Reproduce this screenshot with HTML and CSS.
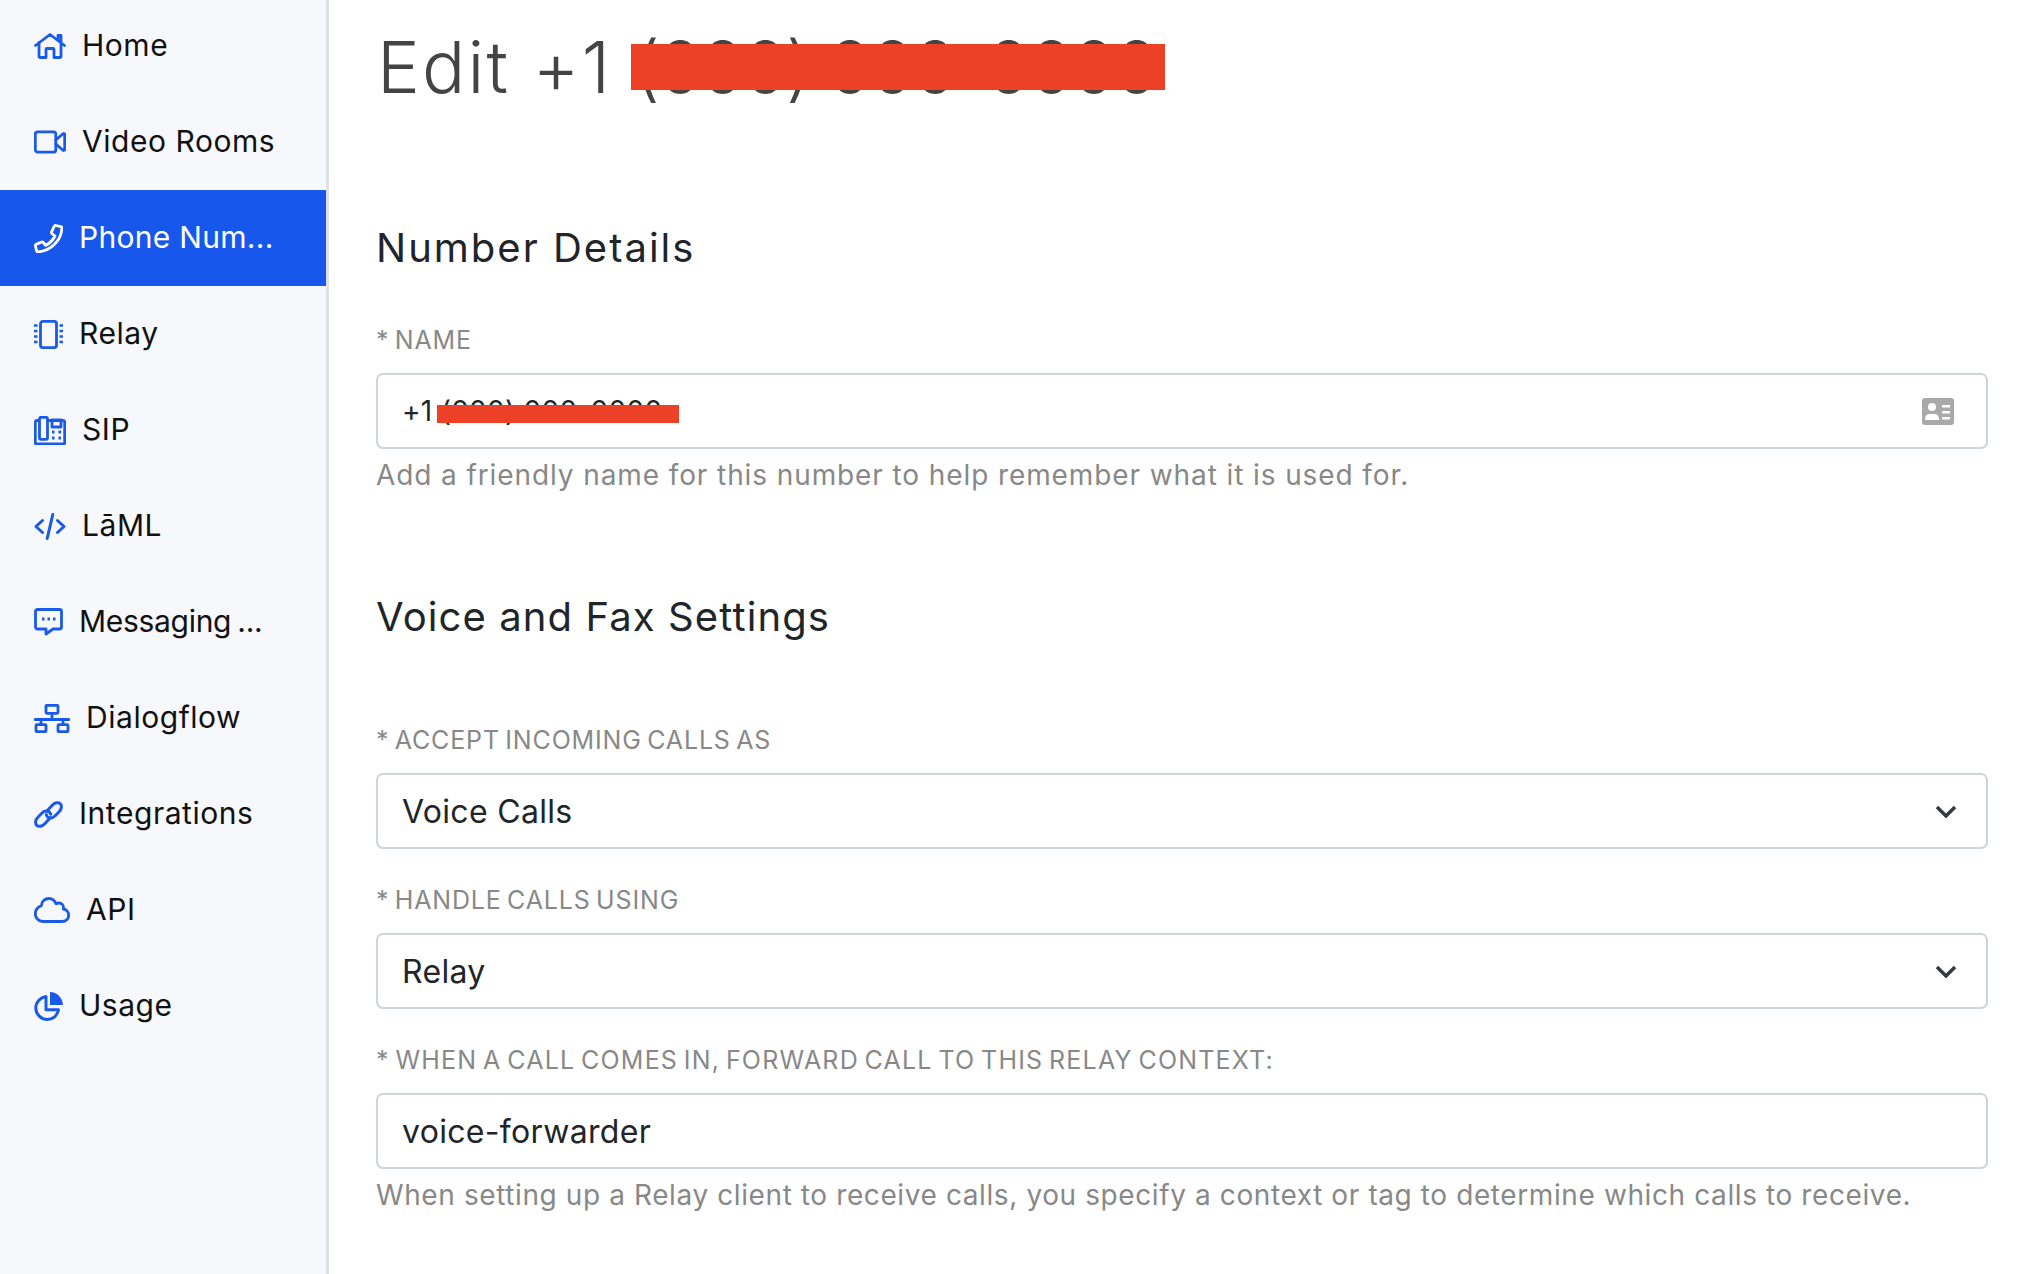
FILE: index.html
```html
<!DOCTYPE html>
<html lang="en">
<head>
<meta charset="utf-8">
<title>Edit number</title>
<link rel="stylesheet" href="styles.css">
</head>
<body>
<div class="app">
  <aside class="sidebar">
    <nav class="nav">
      <a class="nav-item"><svg class="ico w32" viewBox="0 0 32 26"><path d="M1.500 12.500 16 1.500l14.500 11M5 9.500V23a1.500 1.500 0 0 0 1.500 1.500H12V16.500a1 1 0 0 1 1-1h6a1 1 0 0 1 1 1v8h5.500A1.500 1.500 0 0 0 27 23V9.500M24 7V2.500h3V9"/></svg><span class="nav-label">Home</span></a>
      <a class="nav-item"><svg class="ico w32" viewBox="0 0 32 24"><rect x="1.300" y="1.800" width="20.500" height="20.400" rx="2.500"/><path d="M21.800 10 29 3.800c.8-.6 1.700-.1 1.700.8v14.800c0 .9-.9 1.400-1.700.8L21.800 14"/></svg><span class="nav-label">Video Rooms</span></a>
      <a class="nav-item active"><svg class="ico w29" viewBox="0 0 29 29"><path d="M22 1.500l4.800 1.200c.8.200 1.200.9 1.100 1.600C27 17 16.500 27 4.200 27.800c-.8 0-1.500-.4-1.600-1.100L1.400 22c-.2-.7.1-1.300.7-1.600l5.500-2.400c.6-.2 1.200 0 1.600.4l2.400 3c4-2 7.400-5.400 9.400-9.400l-3-2.400c-.5-.4-.7-1.100-.4-1.700l2.600-5.600c.3-.6 1.100-1 1.800-.8z"/></svg><span class="nav-label nav-label-phone">Phone Num...</span></a>
      <a class="nav-item"><svg class="ico w29" viewBox="0 0 29 29"><rect x="6.500" y="1.300" width="16" height="26.400" rx="2.500"/><path class="dash" d="M0 5.500h3.500M0 11h3.500M0 16.500h3.500M0 22h3.500M25.500 5.500H29M25.500 11H29M25.500 16.500H29M25.500 22H29"/></svg><span class="nav-label">Relay</span></a>
      <a class="nav-item"><svg class="ico w32" viewBox="0 0 32 29"><path d="M5 4.500H3A1.800 1.800 0 0 0 1.300 6.300v20.400A1.300 1.300 0 0 0 2.600 28h26.800a1.300 1.300 0 0 0 1.300-1.300V6.300a1.800 1.800 0 0 0-1.700-1.800H14"/><rect x="5.500" y="1.300" width="8" height="22" rx="1.500"/><path d="M18 4v7h9V4z"/><path class="dots" d="M18 16h2.500M24.500 16h2.500M18 22h2.500M24.500 22h2.500"/></svg><span class="nav-label">SIP</span></a>
      <a class="nav-item"><svg class="ico w32" viewBox="0 0 32 27"><path class="thick" d="M8.500 7.500 2 13.500l6.500 6M23.500 7.500l6.500 6-6.500 6M18.800 1.500l-5.600 24"/></svg><span class="nav-label">LāML</span></a>
      <a class="nav-item"><svg class="ico w29" viewBox="0 0 29 28"><path d="M3.500 1.500h22a2 2 0 0 1 2 2v15.500a2 2 0 0 1-2 2H19l-7 5v-5H3.500a2 2 0 0 1-2-2V3.500a2 2 0 0 1 2-2z"/><path class="dots" d="M8 11h2.500M13.500 11H16M19 11h2.500"/></svg><span class="nav-label nav-label-msg">Messaging ...</span></a>
      <a class="nav-item"><svg class="ico w36" viewBox="0 0 36 29"><rect x="12" y="1.300" width="12" height="8" rx="1"/><path d="M18 9.500v6M1 15.500h34"/><path d="M7 15.500v5M29 15.500v5"/><rect x="2" y="20.700" width="10" height="7" rx="1"/><rect x="24" y="20.700" width="10" height="7" rx="1"/></svg><span class="nav-label">Dialogflow</span></a>
      <a class="nav-item"><svg class="ico w29" viewBox="0 0 29 29"><path class="thick" d="M12.500 11.500 18 5.500c2.800-3 6.200-3.700 8.200-1.800s1.500 5.400-1.300 8.300l-3.700 3.800c-2.600 2.600-5.700 2.900-7.700 1-.6-.6-1-1.300-1.200-2.100"/><path class="thick" d="M16.500 17.500 11 23.500c-2.800 3-6.200 3.700-8.200 1.800s-1.500-5.400 1.300-8.300l3.700-3.800c2.600-2.600 5.700-2.900 7.700-1 .6.600 1 1.300 1.200 2.100"/></svg><span class="nav-label">Integrations</span></a>
      <a class="nav-item"><svg class="ico w36" viewBox="0 0 36 26"><path d="M9 24.500h19c3.800 0 6.700-2.800 6.700-6.300 0-3.200-2.300-5.700-5.400-6.200.2-.6.200-1 .2-1.500 0-2.500-2-4.500-4.700-4.500-1 0-1.900.3-2.700.8C20.500 3.300 18 1.500 15 1.500c-4.200 0-7.500 3.100-7.600 7.200C3.800 10 1.300 13 1.300 16.800c0 4.300 3.400 7.700 7.700 7.700z"/></svg><span class="nav-label">API</span></a>
      <a class="nav-item"><svg class="ico w29" viewBox="0 0 29 29"><path class="thick" d="M12 4.500C6 5.500 1.800 10.300 1.800 16c0 6.300 5.200 11.500 11.500 11.500 5.700 0 10.200-4 11.200-9.700H12z"/><path class="solid" d="M16 0c7 .2 12.600 5.800 13 13H16z"/></svg><span class="nav-label">Usage</span></a>
    </nav>
  </aside>
  <main class="main">
    <h1 class="title">Edit +1 <span class="masked masked-title">(000) 000-0000<i class="redact redact-title"></i></span></h1>
    <section class="block-first">
      <h2 class="heading heading-short">Number Details</h2>
      <div class="group">
        <label class="label">* NAME</label>
        <div class="field field-id"><span class="value value-small">+1 <span class="masked">(000) 000-0000<i class="redact redact-name"></i></span></span>
          <svg class="idcard" viewBox="0 0 32 27"><path d="M3 0h26a3 3 0 0 1 3 3v21a3 3 0 0 1-3 3H3a3 3 0 0 1-3-3V3a3 3 0 0 1 3-3z"/><circle class="cut" cx="10" cy="9" r="4"/><path class="cut" d="M3 21c0-3 2-5 4-5h6c2 0 4 2 4 5v1H3zM20 7h8v2.500h-8zM20 13h8v2.500h-8zM20 19h8v2.500h-8z"/></svg>
        </div>
        <p class="help help-short">Add a friendly name for this number to help remember what it is used for.</p>
      </div>
    </section>
    <section class="block-second">
      <h2 class="heading">Voice and Fax Settings</h2>
      <div class="group group-accept">
        <label class="label">* ACCEPT INCOMING CALLS AS</label>
        <div class="field"><span class="value">Voice Calls</span><svg class="chev" viewBox="0 0 22 13"><path d="M2 2l9 9 9-9"/></svg></div>
      </div>
      <div class="group">
        <label class="label">* HANDLE CALLS USING</label>
        <div class="field"><span class="value">Relay</span><svg class="chev" viewBox="0 0 22 13"><path d="M2 2l9 9 9-9"/></svg></div>
      </div>
      <div class="group">
        <label class="label label-long">* WHEN A CALL COMES IN, FORWARD CALL TO THIS RELAY CONTEXT:</label>
        <div class="field"><span class="value">voice-forwarder</span></div>
        <p class="help">When setting up a Relay client to receive calls, you specify a context or tag to determine which calls to receive.</p>
      </div>
    </section>
  </main>
</div>
</body>
</html>
```
FILE: styles.css
```css
* { box-sizing: border-box; }
html, body { margin: 0; height: 100%; overflow: hidden; background: #fff; }
body { font-family: Inter, "Noto Sans", sans-serif; color: #212529; }
.app { display: grid; grid-template-columns: 329px 1fr; height: 1274px; overflow: hidden; }
.sidebar { background: #f6f8fc; border-right: 3px solid #dfe1e5; overflow: hidden; }
.nav { display: flex; flex-direction: column; margin-top: -2px; }
.nav-item { display: flex; align-items: center; gap: 16px; height: 96px; padding-left: 34px; font-size: 30px; letter-spacing: .018em; color: #111; }
.nav-label { margin-bottom: 2px; }
.nav-label-phone { letter-spacing: .01em; }
.nav-label-msg { letter-spacing: -.01em; word-spacing: -2px; }
.nav-item.active { background: #1757ec; color: #fff; }
.ico { flex: none; height: auto; fill: none; stroke: #1a5ae8; stroke-width: 2.8; stroke-linejoin: round; stroke-linecap: round; }
.active .ico { stroke: #fff; }
.w29 { width: 29px; }
.w32 { width: 32px; }
.w36 { width: 36px; }
.ico .thick { stroke-width: 3; }
.ico .dash { stroke-width: 2.500; stroke-linecap: butt; }
.ico .dots { stroke-width: 2.800; stroke-linecap: butt; }
.ico .solid { fill: #1a5ae8; stroke: none; }
.main { padding: 0 30px 0 47px; min-width: 0; }
.title { margin: 0; height: 134px; padding-left: 1px; font-size: 72px; line-height: 134px; font-weight: 300; letter-spacing: .03em; color: #444; white-space: nowrap; }
.masked { position: relative; }
.masked-title { letter-spacing: -.025em; }
.redact { position: absolute; display: block; background: #ec4127; }
.redact-title { left: -4px; top: 21px; width: 534px; height: 46px; }
.redact-name { left: -4px; top: 11px; width: 242px; height: 18px; }
.block-first { padding-top: 84px; }
.block-second { padding-top: 93px; }
.heading { margin: 0; font-size: 40px; line-height: 60px; font-weight: 400; letter-spacing: 1.1px; color: #212529; }
.heading-short { letter-spacing: 2px; }
.group { margin-top: 34px; }
.block-first .group { margin-top: 45px; }
.group-accept.group { margin-top: 76px; }
.label { display: block; height: 34px; margin-bottom: 16px; font-size: 25px; line-height: 34px; color: #888; letter-spacing: .85px; word-spacing: -2.5px; white-space: nowrap; }
.label-long { letter-spacing: 1.2px; }
.field { display: flex; align-items: center; justify-content: space-between; height: 76px; padding: 0 29px 0 24px; border: 2px solid #ced4da; border-radius: 7px; background: #fff; }
.field-id { padding-right: 32px; }
.value { font-size: 32px; letter-spacing: .01em; color: #212529; white-space: nowrap; }
.value-small { font-size: 28px; letter-spacing: .01em; }
.help { margin: 7px 0 0; font-size: 28px; line-height: 38px; color: #888; letter-spacing: .6px; white-space: nowrap; }
.help-short { letter-spacing: .9px; }
.idcard { width: 32px; height: 27px; fill: #a9a9a9; }
.idcard .cut { fill: #fff; }
.chev { width: 22px; height: 13px; fill: none; stroke: #343a40; stroke-width: 3.5; }
```
